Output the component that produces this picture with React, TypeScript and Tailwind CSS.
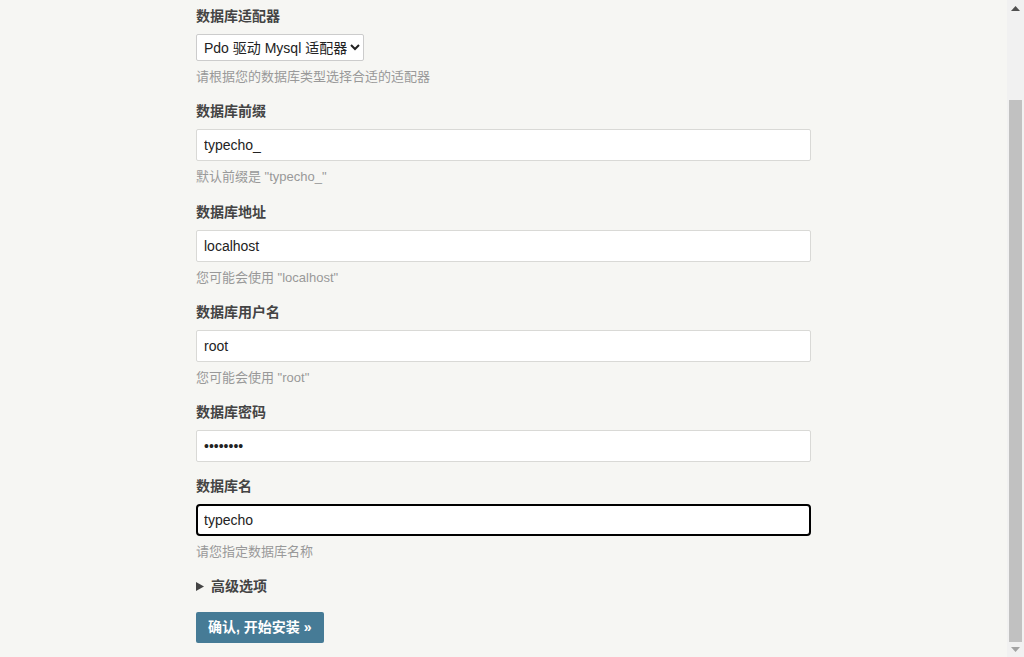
import React from 'react';

const font = { fontFamily: '"Liberation Sans", Arial, "Noto Sans CJK SC", sans-serif' };

function Label({ children }: { children: React.ReactNode }) {
  return <div className="h-[20px] leading-[20px] text-[14px] font-bold text-[#444]">{children}</div>;
}

function Hint({ children }: { children: React.ReactNode }) {
  return <div className="mt-[6px] h-[19px] leading-[19px] text-[13px] text-[#999]">{children}</div>;
}

function Field({ value, type = 'text', focused = false }: { value: string; type?: string; focused?: boolean }) {
  return (
    <input
      readOnly
      type={type}
      defaultValue={value}
      className={
        focused
          ? 'mt-2 block w-full h-[32px] px-[6px] bg-white border-2 border-black rounded-[4px] text-[14px] text-[#222] outline-none'
          : 'mt-2 block w-full h-[32px] px-[7px] bg-white border border-[#d9d9d6] rounded-[2px] text-[14px] text-[#222] outline-none'
      }
      style={font}
    />
  );
}

function Scrollbar() {
  return (
    <div className="w-[17px] h-full bg-[#f1f1f1] flex flex-col items-center">
      <div className="h-[17px] w-full flex items-center justify-center">
        <svg width="9" height="5" viewBox="0 0 9 5"><path d="M4.5 0 L9 5 L0 5 Z" fill="#505050" /></svg>
      </div>
      <div className="mt-[83px] w-[13px] h-[542px] bg-[#c1c1c1]" />
      <div className="flex-1 w-full flex items-center justify-center">
        <svg width="9" height="5" viewBox="0 0 9 5"><path d="M0 0 L9 0 L4.5 5 Z" fill="#a3a3a3" /></svg>
      </div>
    </div>
  );
}

export default function App() {
  return (
    <div className="h-[657px] w-[1024px] overflow-hidden flex bg-[#f6f6f3]" style={font}>
      <div className="flex-1">
        <div className="w-[615px] mx-auto pt-[6px]">
          {/* 适配器 */}
          <Label>数据库适配器</Label>
          <select
            defaultValue="pdo"
            className="mt-2 block h-[27px] w-[168px] pl-[3px] bg-white border border-[#ccc] rounded-[2px] text-[14px] text-[#222]"
            style={font}
          >
            <option value="pdo">Pdo 驱动 Mysql 适配器</option>
          </select>
          <Hint>请根据您的数据库类型选择合适的适配器</Hint>

          <div className="mt-[15px]">
            <Label>数据库前缀</Label>
            <Field value="typecho_" />
            <Hint>默认前缀是 "typecho_"</Hint>
          </div>

          <div className="mt-[16px]">
            <Label>数据库地址</Label>
            <Field value="localhost" />
            <Hint>您可能会使用 "localhost"</Hint>
          </div>

          <div className="mt-[15px]">
            <Label>数据库用户名</Label>
            <Field value="root" />
            <Hint>您可能会使用 "root"</Hint>
          </div>

          <div className="mt-[15px]">
            <Label>数据库密码</Label>
            <Field value="12345678" type="password" />
          </div>

          <div className="mt-[14px]">
            <Label>数据库名</Label>
            <Field value="typecho" focused />
            <Hint>请您指定数据库名称</Hint>
          </div>

          <div className="mt-[15px] h-[20px] flex items-center gap-[7px] text-[14px] font-bold text-[#444]">
            <svg width="8" height="9" viewBox="0 0 8 9"><path d="M0 0 L8 4.5 L0 9 Z" fill="#444" /></svg>
            <span>高级选项</span>
          </div>

          <button
            className="mt-[16px] h-[31px] pl-[12px] pr-[13px] bg-[#467b96] rounded-[2px] text-white text-[14px] font-bold"
            style={font}
          >
            确认, 开始安装 »
          </button>
        </div>
      </div>
      <Scrollbar />
    </div>
  );
}
